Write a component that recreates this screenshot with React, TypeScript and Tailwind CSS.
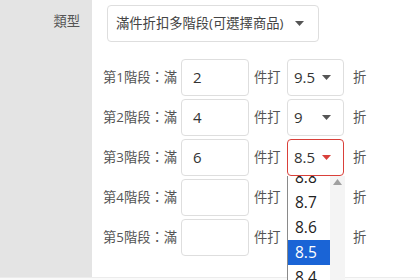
import { useState } from "react";

const font = { fontFamily: '"Open Sans", "Noto Sans CJK TC", sans-serif' };

type Tier = { qty: string; rate: string };

const tiers: Tier[] = [
  { qty: "2", rate: "9.5" },
  { qty: "4", rate: "9" },
  { qty: "6", rate: "8.5" },
  { qty: "", rate: "" },
  { qty: "", rate: "" },
];

const options = ["8.8", "8.7", "8.6", "8.5", "8.4"];

function Caret({ red }: { red?: boolean }) {
  return (
    <svg width="9" height="5" viewBox="0 0 9 5" className="shrink-0">
      <path d="M0 0h9L4.5 5z" fill={red ? "#d9403a" : "#555"} />
    </svg>
  );
}

function RateSelect({ value, open }: { value: string; open?: boolean }) {
  return (
    <div
      className={`relative flex h-[37px] w-[57px] items-center justify-between rounded-[4px] border bg-white pl-[6px] pr-[12px] text-[15px] text-[#333] ${
        open ? "border-[#d9403a]" : "border-[#dedede]"
      }`}
    >
      <span>{value}</span>
      <Caret red={open} />
      {open && (
        <div className="absolute left-[-1px] top-[36px] z-10 h-[110px] w-[58px] overflow-hidden border-l border-[#8a8a8a] bg-white">
          <div className="flex">
            <ul className="-mt-[11px] w-[43px]">
              {options.map((o) => (
                <li
                  key={o}
                  className={`flex h-[25px] items-center pl-[7px] text-[15.5px] ${
                    o === value ? "bg-[#1a64d6] text-white" : "text-[#222]"
                  }`}
                >
                  {o}
                </li>
              ))}
            </ul>
            <div className="flex h-[110px] w-[15px] justify-center bg-[#f4f4f4] pt-[3px]">
              <svg width="9" height="6" viewBox="0 0 9 6">
                <path d="M4.5 0L9 6H0z" fill="#a0a0a0" />
              </svg>
            </div>
          </div>
        </div>
      )}
    </div>
  );
}

export default function App() {
  const [rows] = useState(tiers);

  return (
    <div style={font} className="flex h-[280px] w-[420px] flex-col overflow-hidden bg-white">
      <div className="flex h-[277px]">
        {/* Label column */}
        <div className="w-[92px] shrink-0 bg-[#e4e4e4] pr-[12px] pt-[12px] text-right text-[13.3px] text-[#555]">
          類型
        </div>

        {/* Form column */}
        <div className="flex flex-1 flex-col pt-[5px]">
          <div className="ml-[15px] flex h-[37px] w-[212px] items-center justify-between rounded-[4px] border border-[#dedede] pl-[8px] pr-[14px] text-[13.3px] text-[#444]">
            <span>滿件折扣多階段(可選擇商品)</span>
            <Caret />
          </div>

          <div className="mt-[17px] flex flex-col gap-[3px]">
            {rows.map((r, i) => (
              <div key={i} className="flex h-[37px] items-center text-[13.3px] text-[#555]">
                <span className="w-[89px] pl-[11px]">第{i + 1}階段：滿</span>
                <div className="flex h-[37px] w-[68px] items-center rounded-[4px] border border-[#dedede] pl-[11px] text-[15px] text-[#333]">
                  {r.qty}
                </div>
                <span className="ml-[5px] w-[33px]">件打</span>
                <RateSelect value={r.rate} open={i === 2} />
                <span className="ml-[9px]">折</span>
              </div>
            ))}
          </div>
        </div>
      </div>
      <div className="flex-1 border-t border-[#ececec] bg-[#fafafa]" />
    </div>
  );
}
